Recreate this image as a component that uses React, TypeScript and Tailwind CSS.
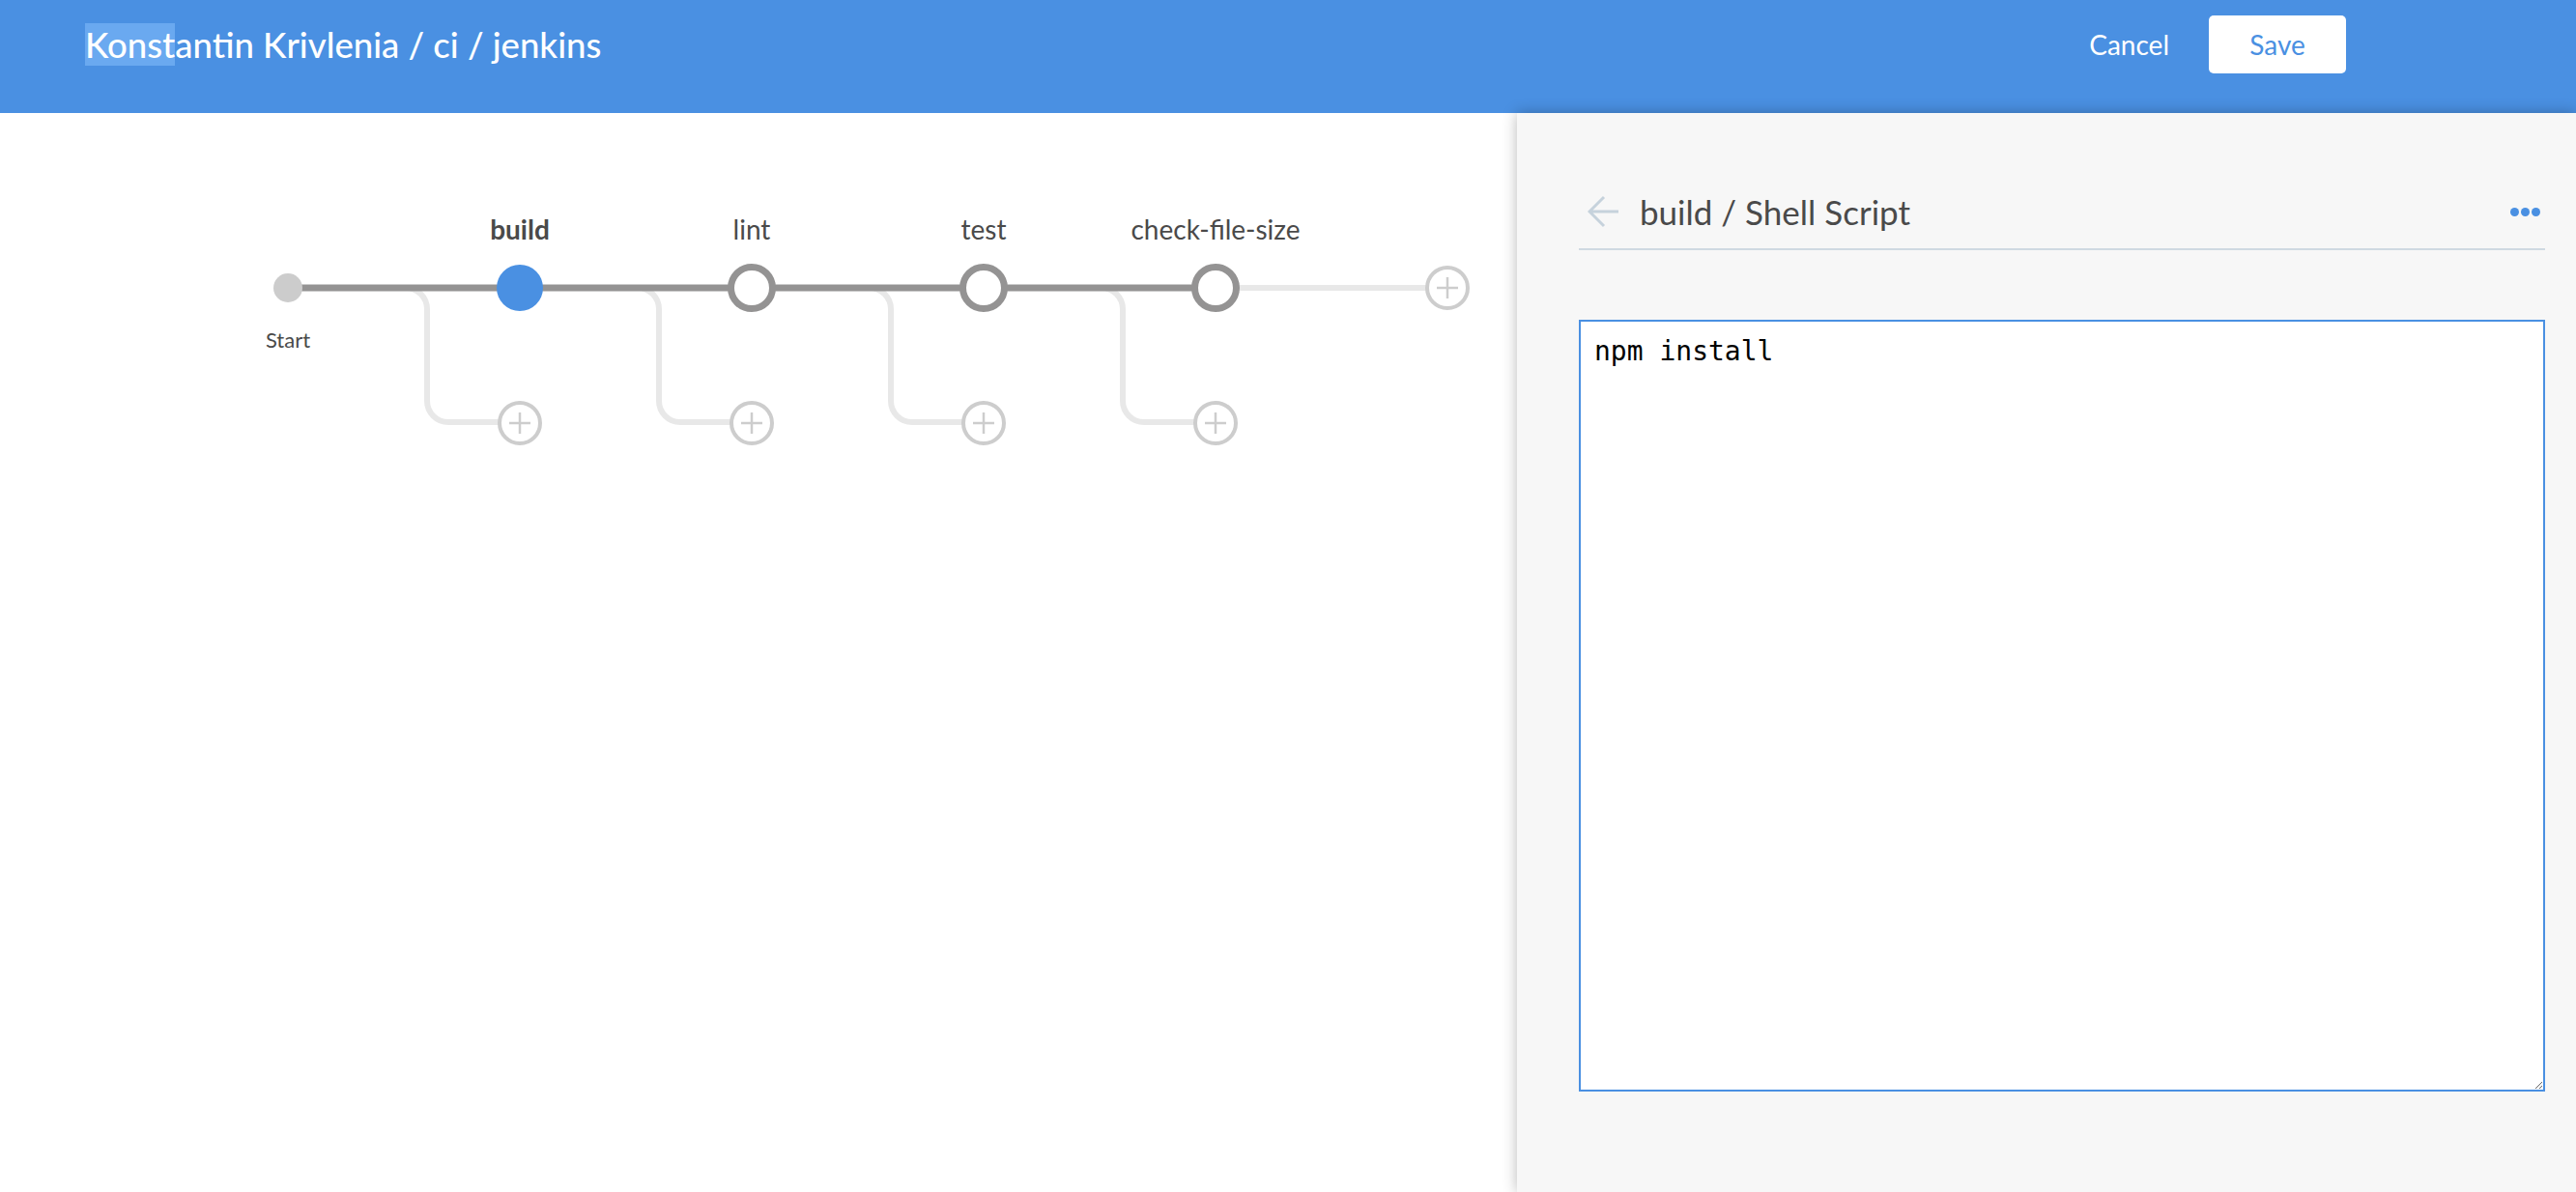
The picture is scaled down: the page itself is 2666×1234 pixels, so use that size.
import React from "react";

const stages = [
  { x: 538, name: "build", selected: true },
  { x: 778, name: "lint", selected: false },
  { x: 1018, name: "test", selected: false },
  { x: 1258, name: "check-file-size", selected: false },
];

function PlusNode({ cx, cy }: { cx: number; cy: number }) {
  return (
    <g>
      <circle cx={cx} cy={cy} r={21} fill="#ffffff" stroke="#cdcdcd" strokeWidth={4} />
      <line x1={cx - 11} y1={cy} x2={cx + 11} y2={cy} stroke="#cdcdcd" strokeWidth={2.5} />
      <line x1={cx} y1={cy - 11} x2={cx} y2={cy + 11} stroke="#cdcdcd" strokeWidth={2.5} />
    </g>
  );
}

function PipelineGraph() {
  return (
    <svg width="1570" height="560" viewBox="0 117 1570 560" className="block">
      {stages.map((s) => (
        <path
          key={"c" + s.name}
          d={`M ${s.x - 122} 298 L ${s.x - 118} 298 A 22 22 0 0 1 ${s.x - 96} 320 L ${s.x - 96} 415 A 22 22 0 0 0 ${s.x - 74} 437 L ${s.x} 437`}
          fill="none"
          stroke="#e8e8e8"
          strokeWidth={6}
        />
      ))}
      <line x1={1258} y1={298} x2={1498} y2={298} stroke="#e8e8e8" strokeWidth={6} />
      <line x1={298} y1={298} x2={1258} y2={298} stroke="#949393" strokeWidth={7} />
      <circle cx={298} cy={298} r={15} fill="#cccccc" />
      <text x={298} y={360} textAnchor="middle" fontFamily="Lato, sans-serif" fontSize={22} fill="#4a4a4a">
        Start
      </text>
      {stages.map((s) => (
        <g key={s.name}>
          {s.selected ? (
            <circle cx={s.x} cy={298} r={24} fill="#4a90e2" />
          ) : (
            <circle cx={s.x} cy={298} r={21.5} fill="#ffffff" stroke="#949393" strokeWidth={7} />
          )}
          <text
            x={s.x}
            y={248}
            textAnchor="middle"
            fontFamily="Lato, sans-serif"
            fontSize={28}
            fontWeight={s.selected ? 700 : 400}
            fill="#4a4a4a"
          >
            {s.name}
          </text>
          <PlusNode cx={s.x} cy={438} />
        </g>
      ))}
      <PlusNode cx={1498} cy={298} />
    </svg>
  );
}

export default function App() {
  return (
    <div className="w-[2666px] h-[1234px] flex flex-col bg-white font-['Lato',sans-serif] overflow-hidden">
      <header className="h-[117px] shrink-0 bg-[#4a90e2] flex items-center pb-[25px] pl-[88px] pr-[238px] relative z-0">
        <div className="text-[36.5px] leading-[44px] text-white font-medium flex-1">
          <span className="bg-[#6aa9f0]">Konst</span>antin Krivlenia / ci / jenkins
        </div>
        <button className="text-[28px] text-white mr-[41px]">Cancel</button>
        <button className="w-[142px] h-[60px] bg-white rounded-[5px] text-[28px] text-[#4a90e2]">Save</button>
      </header>
      <div className="flex flex-1 min-h-0">
        <div className="w-[1570px] shrink-0 bg-white">
          <PipelineGraph />
        </div>
        <aside className="flex-1 bg-[#f7f7f7] relative z-10 shadow-[0_0_14px_rgba(0,0,0,0.28)] pl-[64px] pr-[32px] pt-[78px]">
          <div className="flex items-center h-[48px] border-b-2 border-[#cfd9e2] box-content pb-[14px]">
            <svg width="34" height="34" viewBox="0 0 34 34" className="ml-[9px] mr-[20px]">
              <path d="M32 17 H3 M17 2 L2 17 L17 32" fill="none" stroke="#c6d2dc" strokeWidth="3" />
            </svg>
            <div className="text-[35px] text-[#4a4a4a] flex-1 leading-none">build / Shell Script</div>
            <div className="flex gap-[2px] mr-[5px]">
              <span className="w-[9px] h-[9px] rounded-full bg-[#4a90e2]" />
              <span className="w-[9px] h-[9px] rounded-full bg-[#4a90e2]" />
              <span className="w-[9px] h-[9px] rounded-full bg-[#4a90e2]" />
            </div>
          </div>
          <textarea
            readOnly
            defaultValue="npm install"
            className="mt-[72px] block w-full h-[799px] bg-white border-2 border-[#4a90e2] outline-none p-[14px] font-['DejaVu_Sans_Mono',monospace] text-[28px] leading-[34px] text-black"
          />
        </aside>
      </div>
    </div>
  );
}
